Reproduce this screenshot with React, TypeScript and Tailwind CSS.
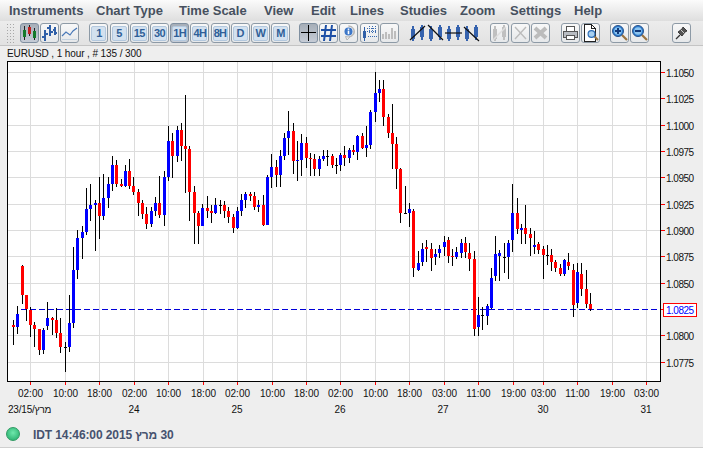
import type { ReactNode } from 'react';
import clsx from 'clsx';

type Candle = [number, number, number, number, 'r' | 'b' | 'd'];

// high, body top, body bottom, low (pixel rows), colour
const candles: Candle[] = [
  [320, 325, 327, 345, 'r'], [306, 314, 327, 334, 'b'], [265, 266, 295, 304, 'r'], [295, 295, 309, 321, 'r'],
  [307, 310, 325, 337, 'r'], [322, 325, 329, 347, 'r'], [329, 329, 350, 355, 'r'], [328, 330, 350, 354, 'b'],
  [302, 318, 326, 330, 'b'], [317, 318, 320, 335, 'r'], [308, 320, 333, 338, 'r'], [318, 333, 347, 353, 'r'],
  [342, 347, 347, 372, 'd'], [295, 323, 347, 352, 'b'], [247, 270, 323, 328, 'b'], [230, 238, 270, 279, 'b'],
  [226, 232, 238, 259, 'b'], [188, 209, 232, 235, 'b'], [184, 205, 209, 221, 'b'], [200, 203, 205, 251, 'b'],
  [177, 203, 216, 239, 'r'], [174, 198, 216, 220, 'b'], [177, 184, 198, 208, 'b'], [156, 165, 184, 191, 'b'],
  [160, 165, 184, 187, 'r'], [179, 184, 186, 187, 'r'], [165, 171, 186, 187, 'b'], [159, 171, 186, 189, 'r'],
  [177, 186, 192, 195, 'r'], [189, 192, 203, 216, 'r'], [200, 203, 214, 219, 'r'], [207, 214, 224, 229, 'r'],
  [207, 211, 224, 227, 'b'], [197, 203, 211, 216, 'b'], [176, 203, 215, 218, 'r'], [171, 177, 215, 226, 'b'],
  [126, 141, 177, 181, 'b'], [133, 141, 156, 178, 'r'], [126, 130, 156, 162, 'b'], [123, 130, 146, 161, 'r'],
  [95, 146, 149, 193, 'r'], [146, 149, 192, 221, 'r'], [186, 192, 213, 244, 'r'], [211, 213, 226, 244, 'r'],
  [204, 208, 226, 226, 'b'], [196, 208, 211, 218, 'r'], [205, 211, 213, 223, 'r'], [198, 205, 213, 214, 'b'],
  [200, 205, 205, 214, 'd'], [201, 205, 211, 218, 'r'], [207, 211, 217, 223, 'r'], [214, 217, 228, 233, 'r'],
  [207, 211, 228, 229, 'b'], [194, 200, 211, 216, 'b'], [192, 194, 200, 208, 'b'], [192, 194, 196, 201, 'r'],
  [192, 196, 207, 210, 'r'], [200, 205, 207, 212, 'b'], [195, 205, 225, 226, 'r'], [175, 177, 225, 225, 'b'],
  [154, 167, 177, 188, 'b'], [160, 167, 175, 187, 'r'], [150, 156, 175, 187, 'b'], [133, 138, 156, 160, 'b'],
  [111, 131, 138, 155, 'b'], [123, 131, 161, 174, 'r'], [141, 160, 161, 181, 'b'], [134, 143, 160, 176, 'b'],
  [137, 143, 158, 168, 'r'], [153, 158, 159, 176, 'r'], [154, 159, 169, 176, 'r'], [156, 159, 169, 176, 'b'],
  [150, 156, 159, 161, 'b'], [150, 156, 156, 166, 'd'], [154, 156, 165, 168, 'r'], [158, 165, 165, 174, 'd'],
  [153, 155, 165, 171, 'b'], [146, 155, 158, 166, 'r'], [148, 150, 158, 163, 'b'], [145, 150, 152, 155, 'r'],
  [135, 136, 152, 160, 'b'], [133, 136, 148, 149, 'r'], [126, 145, 148, 157, 'b'], [110, 112, 145, 149, 'b'],
  [72, 93, 112, 122, 'b'], [80, 89, 93, 102, 'b'], [80, 89, 117, 126, 'r'], [114, 117, 133, 138, 'r'],
  [104, 133, 144, 169, 'r'], [137, 144, 169, 189, 'r'], [168, 169, 213, 223, 'r'], [186, 213, 213, 213, 'd'],
  [203, 209, 213, 227, 'b'], [209, 211, 268, 277, 'r'], [251, 263, 270, 271, 'b'], [243, 249, 262, 266, 'b'],
  [240, 247, 249, 262, 'r'], [243, 249, 258, 271, 'r'], [249, 254, 257, 265, 'b'], [245, 249, 253, 258, 'b'],
  [236, 242, 247, 256, 'b'], [237, 240, 256, 263, 'r'], [249, 256, 257, 266, 'r'], [247, 252, 257, 259, 'b'],
  [239, 243, 253, 258, 'b'], [237, 243, 252, 258, 'r'], [243, 253, 259, 271, 'r'], [251, 259, 329, 336, 'r'],
  [297, 315, 327, 336, 'b'], [307, 315, 315, 330, 'd'], [304, 306, 316, 325, 'b'], [268, 278, 308, 309, 'b'],
  [236, 254, 276, 281, 'b'], [250, 253, 256, 281, 'b'], [243, 257, 257, 273, 'd'], [240, 243, 257, 279, 'b'],
  [184, 213, 240, 252, 'b'], [198, 213, 229, 234, 'r'], [224, 228, 230, 244, 'b'], [205, 228, 234, 244, 'r'],
  [228, 234, 238, 256, 'r'], [231, 245, 247, 254, 'b'], [242, 244, 250, 254, 'r'], [246, 249, 255, 279, 'r'],
  [245, 255, 255, 265, 'd'], [249, 255, 262, 271, 'r'], [260, 262, 268, 272, 'r'], [264, 268, 274, 276, 'r'],
  [259, 260, 274, 276, 'b'], [253, 262, 266, 270, 'r'], [264, 270, 305, 317, 'r'], [263, 272, 303, 308, 'b'],
  [263, 274, 289, 296, 'r'], [270, 289, 304, 308, 'r'], [293, 304, 309, 311, 'r'],
];

const gridX = [30, 65, 99, 134, 168, 203, 237, 272, 306, 340, 375, 409, 444, 478, 513, 543, 577, 612, 646];
const timeLabels = ['02:00', '10:00', '18:00', '02:00', '10:00', '18:00', '02:00', '10:00', '18:00', '02:00', '10:00', '18:00', '03:00', '11:00', '19:00', '03:00', '11:00', '19:00', '03:00'];
const gridY: [number, string][] = [
  [72, '1.1050'], [98, '1.1025'], [125, '1.1000'], [151, '1.0975'], [177, '1.0950'], [204, '1.0925'],
  [230, '1.0900'], [256, '1.0875'], [283, '1.0850'], [335, '1.0800'], [362, '1.0775'],
];
const dates: [number, string][] = [[134, '24'], [237, '25'], [340, '26'], [443, '27'], [543, '30'], [646, '31']];

const COLORS = { r: '#ff0000', b: '#0000ff', d: '#000000' };

function Btn({ children, active }: { children?: ReactNode; active?: boolean }) {
  return (
    <div
      className={clsx(
        'w-[19px] h-[20px] shrink-0 rounded-[3px] border flex items-center justify-center overflow-hidden',
        active
          ? 'border-[#7f8fa0] bg-gradient-to-b from-[#a6aeb8] to-[#c6ccd6]'
          : 'border-[#8d9aa6] bg-gradient-to-b from-[#f8f8f8] to-[#e6e8ea]',
      )}
    >
      {children}
    </div>
  );
}

function Tf({ label, active }: { label: string; active?: boolean }) {
  return (
    <Btn active={active}>
      <span className="w-[15px] h-[15px] rounded-[2px] bg-[#d3e1ef] border border-[#b3c8de] flex items-center justify-center text-[11px] leading-none font-bold text-[#2f5f98] tracking-[-0.7px]">
        {label}
      </span>
    </Btn>
  );
}

function Ico({ children }: { children: ReactNode }) {
  return (
    <svg width="17" height="18" viewBox="0 0 17 18" shapeRendering="crispEdges">
      {children}
    </svg>
  );
}

function BlueBars({ color = '#3562ae' }: { color?: string }) {
  return (
    <>
      <rect x="2" y="5" width="4" height="10" fill={color} />
      <rect x="3" y="2" width="2" height="15" fill={color} />
      <rect x="11" y="3" width="4" height="10" fill={color} />
      <rect x="12" y="1" width="2" height="15" fill={color} />
    </>
  );
}

function LineTool({ d }: { d: string }) {
  return (
    <Ico>
      <BlueBars />
      <path d={d} stroke="#111" strokeWidth="1.2" fill="none" shapeRendering="auto" />
    </Ico>
  );
}

function Magnifier({ sign, x = 7, y = 7 }: { sign: '+' | '-' | ''; x?: number; y?: number }) {
  return (
    <g shapeRendering="auto">
      <path d={`M${x + 4} ${y + 4}l5 5`} stroke="#9a7440" strokeWidth="2.2" />
      <circle cx={x} cy={y} r="5.5" fill="#2f7fd0" stroke="#27508a" strokeWidth="1" />
      <circle cx={x} cy={y} r="3.8" fill="#8cc4f0" />
      {sign && <rect x={x - 3} y={y - 1} width="6" height="2" fill="#123a7a" />}
      {sign === '+' && <rect x={x - 1} y={y - 3} width="2" height="6" fill="#123a7a" />}
    </g>
  );
}

function Chart() {
  return (
    <svg width="703" height="360" viewBox="0 61 703 360" className="block" fontFamily="'Liberation Sans', Arial, sans-serif">
      <g shapeRendering="crispEdges">
        <rect x="7" y="61" width="654" height="321" fill="#ffffff" />
        {gridX.map((x) => (
          <rect key={x} x={x} y="62" width="1" height="319" fill="#dcdcdc" />
        ))}
        {gridY.map(([y]) => (
          <rect key={y} x="8" y={y} width="652" height="1" fill="#dcdcdc" />
        ))}
        <path d="M21 309.5H660" stroke="#0000d8" strokeWidth="1" strokeDasharray="6 3" />
        {candles.map(([h, t, b, l, c], i) => {
          const x = Math.floor(13.4 + i * 4.306);
          return (
            <g key={i}>
              <rect x={x} y={h} width="1" height={l - h} fill="#000000" />
              {c === 'd' ? (
                <rect x={x - 1} y={t} width="3" height="1" fill="#000000" />
              ) : (
                <rect x={x - 1} y={t} width="3" height={Math.max(b - t, 1)} fill={COLORS[c]} />
              )}
            </g>
          );
        })}
        <rect x="7" y="61" width="654" height="1" fill="#000000" />
        <rect x="7" y="381" width="654" height="1" fill="#000000" />
        <rect x="7" y="61" width="1" height="321" fill="#000000" />
        <rect x="660" y="61" width="1" height="321" fill="#000000" />
        {gridX.map((x) => (
          <rect key={x} x={x} y="382" width="1" height="3" fill="#ff0000" />
        ))}
        {gridY.map(([y]) => (
          <rect key={y} x="661" y={y} width="4" height="1" fill="#ff0000" />
        ))}
        <rect x="661" y="309" width="3" height="1" fill="#ff0000" />
        <rect x="663.5" y="303.5" width="33" height="13" fill="#ffffff" stroke="#ff0000" />
      </g>
      <g fontSize="10" fill="#111111">
        {gridY.map(([y, label]) => (
          <text key={y} x="666" y={y + 5} letterSpacing="-0.5">
            {label}
          </text>
        ))}
        <text x="666" y="314" fill="#0000ff" letterSpacing="-0.5">
          1.0825
        </text>
        {gridX.map((x, i) => (
          <text key={x} x={x + 0.5} y="397" textAnchor="middle">
            {timeLabels[i]}
          </text>
        ))}
        <text x="8" y="413" letterSpacing="-0.2">
          23/15/מרץ
        </text>
        {dates.map(([x, label]) => (
          <text key={x} x={x} y="413" textAnchor="middle">
            {label}
          </text>
        ))}
      </g>
    </svg>
  );
}

const menus: [string, string][] = [
  ['Instruments', 'w-[87px]'],
  ['Chart Type', 'w-[83px]'],
  ['Time Scale', 'w-[85px]'],
  ['View', 'w-[47px]'],
  ['Edit', 'w-[39px]'],
  ['Lines', 'w-[50px]'],
  ['Studies', 'w-[60px]'],
  ['Zoom', 'w-[50px]'],
  ['Settings', 'w-[64px]'],
  ['Help', 'w-[40px]'],
];

export default function App() {
  return (
    <div className="w-[707px] h-[450px] bg-white overflow-hidden font-['Liberation_Sans',Arial,sans-serif]">
      <div className="w-[703px] h-[448px] bg-[#eeeeee] border-b border-[#cfcfcf] flex flex-col">
        {/* Menu */}
        <div className="h-[21px] shrink-0 flex items-center pl-[9px] bg-gradient-to-b from-[#fbfbfb] to-[#dedede]">
          {menus.map(([label, w]) => (
            <span key={label} className={clsx(w, 'text-[13px] font-bold text-[#46505e]')}>
              {label}
            </span>
          ))}
        </div>

        {/* Toolbar */}
        <div className="h-[25px] shrink-0 flex items-center pl-[6px] bg-gradient-to-b from-[#ececec] to-[#e2e2e2] border-b border-[#c4c4c4]">
          <div className="w-[9px] h-[20px] mr-[5px] shrink-0 bg-[radial-gradient(#a8a8a8_1px,transparent_1px)] bg-[length:3px_3px]" />

          <div className="flex gap-[1.2px]">
            <Btn active>
              <Ico>
                <rect x="3" y="2" width="1" height="14" fill="#222" />
                <rect x="2" y="6" width="3" height="7" fill="#157a2a" />
                <rect x="8" y="1" width="1" height="11" fill="#222" />
                <rect x="7" y="3" width="3" height="7" fill="#c2201e" />
                <rect x="13" y="4" width="1" height="12" fill="#222" />
                <rect x="12" y="7" width="3" height="7" fill="#157a2a" />
              </Ico>
            </Btn>
            <Btn>
              <Ico>
                <path d="M4 6v11M1 13h3M4 10h3M9 1v11M6 4h3M9 8h3M14 3v8M12 6h2M14 9h2" stroke="#2f5fa8" strokeWidth="1.4" fill="none" />
              </Ico>
            </Btn>
            <Btn>
              <Ico>
                <path d="M1 12l4-4 4 3 3-4 4-3" stroke="#4a79b8" strokeWidth="1.2" fill="none" shapeRendering="auto" />
                <path d="M1 15h15" stroke="#c4d2e0" />
              </Ico>
            </Btn>
          </div>

          <div className="flex gap-[1.2px] ml-[10px]">
            <Tf label="1" />
            <Tf label="5" />
            <Tf label="15" />
            <Tf label="30" />
            <Tf label="1H" active />
            <Tf label="4H" />
            <Tf label="8H" />
            <Tf label="D" />
            <Tf label="W" />
            <Tf label="M" />
          </div>

          <div className="flex gap-[1.2px] ml-[9px]">
            <Btn active>
              <Ico>
                <rect x="8" y="1" width="1" height="16" fill="#000" />
                <rect x="1" y="8" width="15" height="1" fill="#000" />
              </Ico>
            </Btn>
            <Btn>
              <Ico>
                <path d="M6 1L4 17M12 1l-2 16M1 6h15M1 12h15" stroke="#1d4fa6" strokeWidth="2" fill="none" shapeRendering="auto" />
              </Ico>
            </Btn>
            <Btn>
              <Ico>
                <g shapeRendering="auto">
                  <path d="M8.5 2a6 5.5 0 1 1-3 10.5L7 16l3-3.2A6 5.5 0 0 0 8.5 2z" fill="#f2f2f2" stroke="#b4b4b4" />
                  <circle cx="8.5" cy="7.5" r="4" fill="#3d77c8" />
                  <rect x="7.7" y="4.5" width="1.6" height="1.4" fill="#fff" />
                  <rect x="7.7" y="6.6" width="1.6" height="3.6" fill="#fff" />
                </g>
              </Ico>
            </Btn>
            <Btn>
              <Ico>
                <rect x="2" y="7" width="3" height="7" fill="#2f5fa8" />
                <rect x="3" y="3" width="1" height="14" fill="#2f5fa8" />
                <path d="M8 2v7M11 2v7M14 2v7M6 4h10M6 7h10" stroke="#3b6bb0" strokeDasharray="1 1" />
                <path d="M7 12h9" stroke="#3b6bb0" strokeDasharray="1 1" />
              </Ico>
            </Btn>
            <Btn>
              <Ico>
                <path d="M2 15v-5M5 15V8M8 15V10M11 15V4M14 15V7" stroke="#bdbdbd" strokeWidth="2.4" fill="none" />
              </Ico>
            </Btn>
          </div>

          <div className="flex gap-[1.2px] ml-[10px]">
            <LineTool d="M1 16L16 2" />
            <LineTool d="M1 1l15 15" />
            <LineTool d="M0 9h17" />
            <LineTool d="M1 3l15 14" />
          </div>

          <div className="flex gap-[1.2px] ml-[10px]">
            <Btn>
              <Ico>
                <BlueBars color="#c0c0c0" />
                <path d="M2 16L15 3" stroke="#dedede" strokeWidth="1.4" fill="none" shapeRendering="auto" />
              </Ico>
            </Btn>
            <Btn>
              <Ico>
                <path d="M3 3l11 12M14 3L3 15" stroke="#bcbcbc" strokeWidth="1.4" fill="none" shapeRendering="auto" />
              </Ico>
            </Btn>
            <Btn>
              <Ico>
                <path d="M3 4l11 10M14 4L3 14" stroke="#bcbcbc" strokeWidth="4" fill="none" shapeRendering="auto" />
              </Ico>
            </Btn>
          </div>

          <div className="flex gap-[1.2px] ml-[11px]">
            <Btn>
              <Ico>
                <rect x="4.5" y="2.5" width="8" height="5" fill="#fff" stroke="#555" />
                <rect x="1.5" y="7.5" width="14" height="6" fill="#b8bcc2" stroke="#555" />
                <rect x="4.5" y="11.5" width="8" height="4" fill="#fff" stroke="#555" />
              </Ico>
            </Btn>
            <Btn>
              <Ico>
                <path d="M2.5 0.5h7l4 4v13h-11z" fill="#fff" stroke="#222" />
                <path d="M9.5 0.5v4h4" fill="none" stroke="#222" />
                <g shapeRendering="auto">
                  <path d="M12 12l4 4" stroke="#9a7440" strokeWidth="2" />
                  <circle cx="9.5" cy="10" r="3.4" fill="#a8d0f0" stroke="#2f6fb8" strokeWidth="1.2" />
                </g>
              </Ico>
            </Btn>
          </div>

          <div className="flex gap-[1.2px] ml-[10px]">
            <Btn>
              <Ico>
                <Magnifier sign="+" />
              </Ico>
            </Btn>
            <Btn>
              <Ico>
                <Magnifier sign="-" />
              </Ico>
            </Btn>
          </div>

          <div className="ml-[23px]">
            <Btn>
              <Ico>
                <g shapeRendering="auto">
                  <path d="M3 15l4-4" stroke="#333" strokeWidth="1.2" />
                  <path d="M5 8l4-3 1-2 4 4-2 1-3 4z" fill="#555" stroke="#222" strokeWidth="0.8" />
                  <path d="M8 6l3 3" stroke="#ccc" />
                </g>
              </Ico>
            </Btn>
          </div>
        </div>

        {/* Chart caption */}
        <div className="h-[15px] shrink-0 pl-[7px] text-[10px] leading-[15px] text-[#111] tracking-[-0.1px]">
          EURUSD , 1 hour , # 135 / 300
        </div>

        <Chart />

        {/* Status */}
        <div className="flex-1 flex items-center pl-[6px]">
          <div className="w-[14px] h-[14px] rounded-full border border-[#2f9a62] bg-[radial-gradient(circle_at_50%_40%,#6fe8ac,#1fa866)]" />
          <span className="ml-[13px] mt-px text-[12px] font-bold text-[#46526e] tracking-[-0.1px]">
            IDT 14:46:00 2015 <bdi>מרץ</bdi> 30
          </span>
        </div>
      </div>
    </div>
  );
}
